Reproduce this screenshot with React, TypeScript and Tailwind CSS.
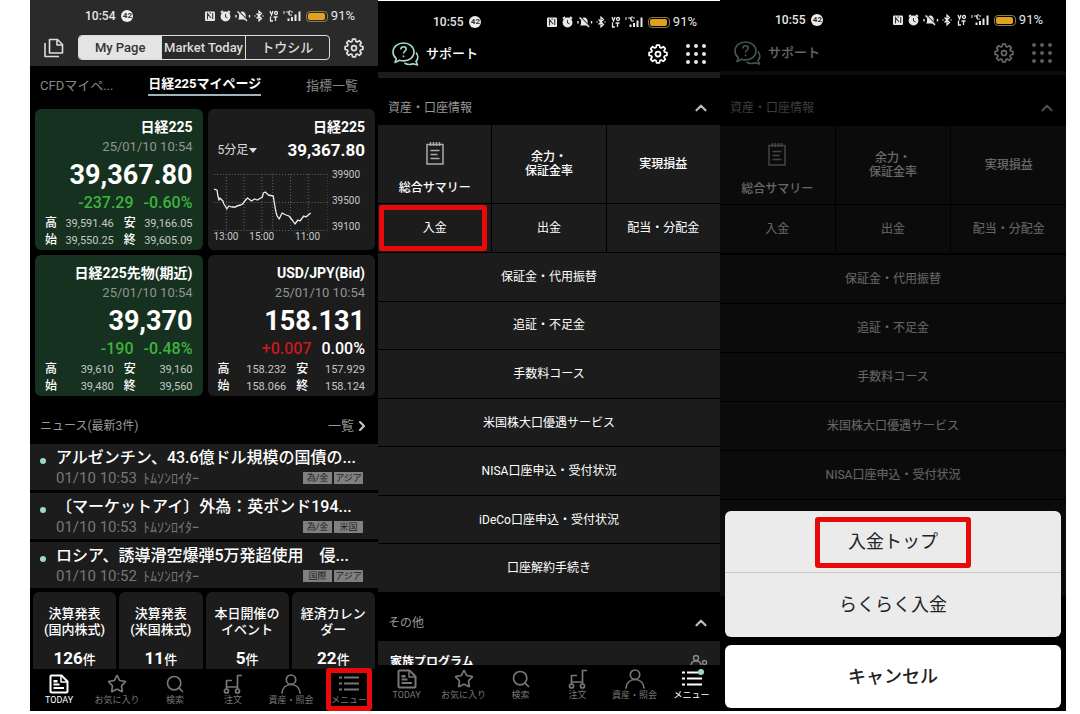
import type { ReactNode } from 'react'
import { ChevronRight, ChevronUp, Search, Star } from 'lucide-react'

const teeth = Array.from({ length: 8 }, (_, i) => i * 45)

const gearOutline = teeth
  .flatMap((a) => [
    [a - 9, 10.8],
    [a + 9, 10.8],
    [a + 17, 8.2],
    [a + 28, 8.2],
  ])
  .map(([deg, r]) => {
    const rad = (deg * Math.PI) / 180
    return `${12 + r * Math.cos(rad)},${12 + r * Math.sin(rad)}`
  })
  .join(' ')

function Gear() {
  return (
    <svg viewBox="0 0 24 24" className="size-5" fill="none" stroke="currentColor" strokeWidth="2.1" strokeLinejoin="round">
      <polygon points={gearOutline} />
      <circle cx="12" cy="12" r="3" />
    </svg>
  )
}

function StatusBar({ time, className }: { time: string; className: string }) {
  return (
    <div className={`flex items-center justify-between pl-[55px] pr-[23px] text-[#e8e8e8] ${className}`}>
      <div className="flex items-center gap-1.5 text-xs font-medium">
        <span>{time}</span>
        <span className="flex size-3 items-center justify-center rounded-full bg-[#eee] text-[8px] font-bold text-[#333]">42</span>
      </div>
      <div className="flex items-center gap-[3px]">
        <svg viewBox="0 0 98 12" className="h-3 w-[98px]" fill="none" stroke="currentColor">
          <rect x="0" y="1.5" width="10" height="9.5" rx="1" fill="currentColor" stroke="none" />
          <path d="M2.5 9.5V3.5L6 8M7.7 3v6M4.5 3h1.5" stroke="#333" strokeWidth="1.1" />
          <circle cx="20.5" cy="6.5" r="4.9" fill="currentColor" stroke="none" />
          <path d="M20.5 4v3l2 .8" stroke="#333" />
          <path d="M16 2.7l2-1.700M25 2.7L23 1" strokeWidth="1.8" />
          <path d="M33 9.500h9c-1-1-1.300-2-1.300-4C40.700 3.300 39.300 1.500 37.300 1.500S34 3.300 34 5.500c0 2 0 3-1 4z" fill="currentColor" stroke="none" />
          <path d="M33.500 1l9 9" stroke="#333" strokeWidth="1.200" />
          <path d="M32.500 1.500l9.500 9.500M31 5v2.500M44.500 5v2.500" strokeWidth="1.400" />
          <path d="M51.500 3.500l5 5-2.500 2.300V1.200l2.500 2.300-5 5M49.500 6h1M57.500 6h1" strokeWidth="1.300" />
          <path d="M65 1l1.500 4L68 1M65.500 6.500v4.500h2.500M68.500 7h4M70.500 7v4" strokeWidth="1.300" />
          <circle cx="71" cy="3" r="1.500" strokeWidth="1.300" />
          <path d="M79 1v3M81 2h3v2M86 1h-2v4h3M87 1v2" />
          <path d="M83.500 11V8.500M87 11V7M90.500 11V4.500M94.500 11V1.500" strokeWidth="2" />
        </svg>
        <span className="flex h-[11px] w-[22px] rounded-[4px] border border-[#8a7a50] p-px">
          <span className="w-[17px] rounded-[2px] bg-[#e0a020]" />
        </span>
        <span className="text-[13px] leading-4">91%</span>
      </div>
    </div>
  )
}

function TodayIcon() {
  return (
    <svg viewBox="0 0 20 20" className="size-5" fill="none" stroke="currentColor" strokeWidth="2" strokeLinejoin="round">
      <path d="M1.500 2.500a1 1 0 0 1 1-1h10l6 6v10a1 1 0 0 1-1 1h-15a1 1 0 0 1-1-1z" />
      <path d="M12 2v6h6" strokeWidth="1.500" />
      <path d="M4.500 10.500h6M4.500 14h10.500" strokeWidth="1.800" />
      <path d="M4.500 6h4v2.500h-4z" fill="currentColor" stroke="none" />
    </svg>
  )
}

function CartIcon() {
  return (
    <svg viewBox="0 0 20 20" className="size-5" fill="none" stroke="currentColor" strokeWidth="1.700" strokeLinejoin="round">
      <circle cx="3.500" cy="17" r="2" />
      <circle cx="14.500" cy="17" r="2" />
      <path d="M3.500 15V6.500H9M3.500 13h11M14.500 15V1.500H19" />
    </svg>
  )
}

function PersonIcon() {
  return (
    <svg viewBox="0 0 20 20" className="size-5" fill="none" stroke="currentColor" strokeWidth="1.700" strokeLinecap="round">
      <circle cx="10" cy="5.700" r="4.700" />
      <path d="M1 19c.5-5 4-8.500 9-8.500s8.500 3.500 9 8.500" />
    </svg>
  )
}

function MenuIcon() {
  return (
    <svg viewBox="0 0 20 20" className="size-5" fill="none" stroke="currentColor" strokeWidth="2">
      <path d="M0 3.500h3M0 9.500h3M0 15.500h3M5 3.500h15M5 9.500h15M5 15.500h15" />
    </svg>
  )
}

const navItems = [
  { label: 'TODAY', icon: <TodayIcon /> },
  { label: 'お気に入り', icon: <Star className="size-5" strokeWidth={2} /> },
  { label: '検索', icon: <Search className="size-5" strokeWidth={2} /> },
  { label: '注文', icon: <CartIcon /> },
  { label: '資産・照会', icon: <PersonIcon /> },
  { label: 'メニュー', icon: <MenuIcon /> },
]

function BottomNav({ active, marked, dot, className }: { active: string; marked?: string; dot?: string; className: string }) {
  return (
    <nav className={`grid grid-cols-6 bg-black ${className}`}>
      {navItems.map((item) => (
        <a
          key={item.label}
          href="#"
          className={`relative flex flex-col items-center gap-px whitespace-nowrap text-[9px] leading-[11px] ${item.label === active ? 'text-white' : 'text-[#777]'}`}
        >
          {item.icon}
          {item.label}
          {item.label === dot && <span className="absolute right-4 top-0 size-1.5 rounded-full bg-[#9fd6d2]" />}
          {item.label === marked && <span className="absolute -top-1.5 bottom-0 left-1.5 right-1.5 rounded-[3px] border-[5px] border-[#e60a0a]" />}
        </a>
      ))}
    </nav>
  )
}

type Quote = {
  name: string
  price: string
  diff: string
  rate: string
  diffColor: string
  rateColor: string
  bg: string
  stats: string[][]
}

const quotes: Quote[] = [
  {
    name: '日経225',
    price: '39,367.80',
    diff: '-237.29',
    rate: '-0.60%',
    diffColor: 'text-[#3cb43c]',
    rateColor: 'text-[#3cb43c]',
    bg: 'bg-[#16311f]',
    stats: [['高', '39,591.46'], ['安', '39,166.05'], ['始', '39,550.25'], ['終', '39,605.09']],
  },
  {
    name: '日経225先物(期近)',
    price: '39,370',
    diff: '-190',
    rate: '-0.48%',
    diffColor: 'text-[#3cb43c]',
    rateColor: 'text-[#3cb43c]',
    bg: 'bg-[#16311f]',
    stats: [['高', '39,610'], ['安', '39,160'], ['始', '39,480'], ['終', '39,560']],
  },
  {
    name: 'USD/JPY(Bid)',
    price: '158.131',
    diff: '+0.007',
    rate: '0.00%',
    diffColor: 'text-[#c8191e]',
    rateColor: 'text-white',
    bg: 'bg-[#1c1c1c]',
    stats: [['高', '158.232'], ['安', '157.929'], ['始', '158.066'], ['終', '158.124']],
  },
]

function QuoteCard({ quote }: { quote: Quote }) {
  return (
    <div className={`rounded-md px-2.5 pb-px pt-2 text-right text-white ${quote.bg}`}>
      <h2 className="text-sm font-bold leading-5">{quote.name}</h2>
      <p className="text-[13px] leading-5 text-[#8f9691]">25/01/10 10:54</p>
      <p className="text-[27px] font-bold leading-9">{quote.price}</p>
      <p className="flex justify-end gap-2.5 text-base font-medium leading-5">
        <span className={quote.diffColor}>{quote.diff}</span>
        <span className={quote.rateColor}>{quote.rate}</span>
      </p>
      <dl className="mt-0.5 grid grid-cols-2 gap-x-2.5 text-[11px] leading-[17px]">
        {quote.stats.map(([label, value]) => (
          <div key={label} className="flex justify-between">
            <dt className="text-xs font-medium leading-[17px]">{label}</dt>
            <dd className="text-[#c4c8c5]">{value}</dd>
          </div>
        ))}
      </dl>
    </div>
  )
}

function ChartCard() {
  return (
    <div className="rounded-md bg-[#1c1c1c] px-2.5 pt-2 text-white">
      <h2 className="text-right text-sm font-bold leading-5">日経225</h2>
      <div className="flex items-center justify-between">
        <label className="flex items-center text-[#ddd]">
          <select aria-label="足種" className="appearance-none bg-transparent text-xs leading-4">
            <option>5分足</option>
          </select>
          <svg viewBox="0 0 8 5" className="h-[5px] w-2" fill="currentColor">
            <path d="M0 0h8L4 5z" />
          </svg>
        </label>
        <span className="text-[17px] font-bold leading-[26px]">39,367.80</span>
      </div>
      <div className="-ml-1 mt-1 flex text-[10px] text-[#c8c8c8]">
        <div className="flex-1">
          <svg viewBox="0 0 116 64" className="h-16 w-full" fill="none" preserveAspectRatio="none">
            <path d="M0 7.500h116M0 35.500h116M0 63.500h116M12.500 7v57M30.500 7v57M48.500 7v57M59.500 7v57M77.500 7v57M95.500 7v57M115.500 7v57" stroke="#666" strokeDasharray="1 2" />
            <path
              d="M0 22l3 1 1 6 1 4 1-2 3 3 1 3 2 3 1 2 2-3 3 1h4l1-1 4-1 2-1 3-4 2-2 4 3 3-2 3 1 5-3 1-4 2-1 3 3 5 1 1 6 1 6 1 5 1 3 2 3 3-6 4 2 3 1 4 5 2 3 3-4 2 1 4-5 2 1 5-4"
              stroke="#eee"
              strokeWidth="1.300"
              strokeLinejoin="round"
            />
          </svg>
          <div className="flex justify-between pr-2 leading-3">
            <span>13:00</span>
            <span>15:00</span>
            <span className="ml-2.5">11:00</span>
          </div>
        </div>
        <div className="flex w-[37px] flex-col justify-between pb-2.5 pl-1 pt-0.5 leading-3">
          <span>39900</span>
          <span>39500</span>
          <span>39100</span>
        </div>
      </div>
    </div>
  )
}

const news = [
  { title: 'アルゼンチン、43.6億ドル規模の国債の...', time: '01/10 10:53', tags: ['為/金', 'アジア'] },
  { title: '〔マーケットアイ〕外為：英ポンド194...', time: '01/10 10:53', tags: ['為/金', '米国'] },
  { title: 'ロシア、誘導滑空爆弾5万発超使用　侵...', time: '01/10 10:52', tags: ['国際', 'アジア'] },
]

const events = [
  { lines: ['決算発表', '(国内株式)'], count: 126 },
  { lines: ['決算発表', '(米国株式)'], count: 11 },
  { lines: ['本日開催の', 'イベント'], count: 5 },
  { lines: ['経済カレン', 'ダー'], count: 22 },
]

function MyPageScreen() {
  return (
    <section className="flex min-w-0 flex-col bg-black">
      <header className="bg-[#2a2a2a] pb-1.5">
        <StatusBar time="10:54" className="h-8" />
        <div className="flex items-center gap-3.5 px-3.5 pt-[3px] text-[#ddd]">
          <svg viewBox="0 0 20 20" className="size-5" fill="none" stroke="currentColor" strokeWidth="1.600" strokeLinejoin="round">
            <path d="M5.500 1.500h8l5 5v8.500h-13z" />
            <path d="M13 2v5h5" />
            <path d="M1 5v13.500h14" />
          </svg>
          <div className="grid h-[25px] flex-1 grid-cols-3 divide-x divide-[#ddd] overflow-hidden whitespace-nowrap rounded border border-[#ddd] text-[13px] font-medium">
            <button className="bg-[#e4e4e4] text-[#333]">My Page</button>
            <button>Market Today</button>
            <button>トウシル</button>
          </div>
          <button aria-label="設定"><Gear /></button>
        </div>
      </header>
      <nav className="flex h-[43px] items-start justify-between pl-2.5 pr-5 pt-2 text-[13px] text-[#888]">
        <a href="#" className="pt-0.5 leading-5">CFDマイペ...</a>
        <a href="#" className="border-b-2 border-[#9fb4bc] font-bold leading-5 text-white">日経225マイページ</a>
        <a href="#" className="ml-2.5 pt-0.5 leading-5">指標一覧</a>
      </nav>
      <div className="grid grid-cols-2 gap-[5px] pl-[5px] pr-[3px]">
        <QuoteCard quote={quotes[0]} />
        <ChartCard />
        <QuoteCard quote={quotes[1]} />
        <QuoteCard quote={quotes[2]} />
      </div>
      <div className="flex h-12 items-center justify-between pl-2.5 pr-2 pt-3 text-xs text-[#999]">
        <h2>ニュース(最新3件)</h2>
        <a href="#" className="flex items-center text-[13px]">
          一覧
          <ChevronRight className="size-4 text-[#ccc]" strokeWidth={3} />
        </a>
      </div>
      <ul className="flex flex-col gap-[3px]">
        {news.map((n) => (
          <li key={n.title}>
            <a href="#" className="flex h-[46px] items-center gap-2.5 bg-[#1c1c1c] pl-2.5 pr-[15px]">
              <span className="mt-3.5 size-1.5 shrink-0 self-start rounded-full bg-[#9fd6d2]" />
              <span className="min-w-0 flex-1">
                <span className="block whitespace-nowrap text-base font-medium leading-[22px] text-white">{n.title}</span>
                <span className="flex items-center gap-1.5 text-[15px] leading-[18px] text-[#777]">
                  {n.time}
                  <span className="flex-1 text-sm leading-[18px]">ﾄﾑｿﾝﾛｲﾀｰ</span>
                  <span className="flex gap-0.5">
                    {n.tags.map((tag) => (
                      <span key={tag} className="w-[29px] bg-[#808080] text-center text-[9px] leading-3 text-[#222]">{tag}</span>
                    ))}
                  </span>
                </span>
              </span>
            </a>
          </li>
        ))}
      </ul>
      <div className="mt-1 grid grid-cols-4 gap-[3px] px-[3px] text-center text-[13px] font-medium text-white">
        {events.map((e, i) => (
          <a key={i} href="#" className="flex h-[77px] flex-col rounded-t-md bg-[#1c1c1c] pt-3.5 leading-4">
            <span className="whitespace-nowrap">{e.lines[0]}</span>
            <span className="whitespace-nowrap">{e.lines[1]}</span>
            <span className="mt-2 leading-6">
              <b className="text-[17px]">{e.count}</b>件
            </span>
          </a>
        ))}
      </div>
      <BottomNav active="TODAY" marked="メニュー" className="h-[42px] pt-[5px]" />
    </section>
  )
}

function SupportHeader({ className }: { className: string }) {
  return (
    <div className={`flex items-center pl-3.5 pr-3.5 text-white ${className}`}>
      <svg viewBox="0 0 28 24" className="h-6 w-7" fill="none" stroke="#a9d8cc" strokeWidth="1.600" strokeLinejoin="round">
        <path d="M11.500 1C5.500 1 1 5 1 10c0 2.800 1.300 5 3.300 6.700L3 20.500l4.500-2.200c1.300.4 2.600.6 4 .6 6 0 10.500-4 10.500-9S17.500 1 11.500 1z" />
        <path d="M24 10.500c2.500 3 2 6.500 0 9l1.500 3.500-4.500-1.300c-3 1.200-6 1-8.500-.7" />
        <path d="M8.800 7.500c0-1.800 1.200-2.800 2.700-2.800s2.700 1 2.700 2.500c0 2-2.700 2-2.700 4.300M11.500 13.500v1.800" />
      </svg>
      <h1 className="ml-1.5 flex-1 text-[13px] font-medium leading-4">サポート</h1>
      <button aria-label="設定" className="mr-[18px]"><Gear /></button>
      <button aria-label="アプリ一覧" className="grid grid-cols-3 gap-1">
        {Array.from({ length: 9 }, (_, i) => (
          <span key={i} className="size-1 rounded-full bg-[#e8e8e8]" />
        ))}
      </button>
    </div>
  )
}

function SectionTitle({ children, className }: { children: ReactNode; className: string }) {
  return (
    <div className={`flex items-center justify-between pl-2.5 pr-2.5 text-xs text-[#999] ${className}`}>
      <h2>{children}</h2>
      <ChevronUp className="size-[18px] text-[#bbb]" strokeWidth={3} />
    </div>
  )
}

function AssetTiles({ marked }: { marked?: boolean }) {
  return (
    <div className="grid grid-cols-3 gap-px text-xs leading-[14px] text-white">
      <button className="flex h-[78px] flex-col items-center bg-[#1c1c1c] pt-4 font-medium">
        <svg viewBox="0 0 18 24" className="mb-4 h-6 w-[18px] text-[#aaa]" fill="none" stroke="currentColor" strokeWidth="1.500">
          <path d="M1 3.500h16v19.500H1zM4.500 1v4M7.500 1v4M10.500 1v4M13.500 1v4M4.500 9.500h9M4.500 13.500h7M4.500 17.500h9" />
        </svg>
        総合サマリー
      </button>
      <button className="bg-[#1c1c1c] font-medium">
        余力・
        <br />
        保証金率
      </button>
      <button className="bg-[#1c1c1c] font-medium">実現損益</button>
      <button className="relative h-12 bg-[#1c1c1c]">
        入金
        {marked && <span className="absolute inset-y-px left-px right-1 rounded-[3px] border-[5px] border-[#e60a0a]" />}
      </button>
      <button className="bg-[#1c1c1c]">出金</button>
      <button className="bg-[#1c1c1c]">配当・分配金</button>
    </div>
  )
}

const menuRows = [
  '保証金・代用振替',
  '追証・不足金',
  '手数料コース',
  '米国株大口優遇サービス',
  'NISA口座申込・受付状況',
  'iDeCo口座申込・受付状況',
  '口座解約手続き',
]

function MenuScreen() {
  return (
    <section className="mt-px flex min-w-0 flex-col bg-black">
      <StatusBar time="10:55" className="h-[42px]" />
      <SupportHeader className="h-[29px] pb-[7px]" />
      <div className="h-1.5 bg-[#1c1c1c]" />
      <SectionTitle className="h-[47px] pt-3">資産・口座情報</SectionTitle>
      <AssetTiles marked />
      <div className="mt-px flex min-h-[339px] flex-col gap-px text-xs text-white">
        {menuRows.map((row) => (
          <button key={row} className="flex-1 bg-[#1c1c1c]">{row}</button>
        ))}
      </div>
      <SectionTitle className="h-[49px] pt-3">その他</SectionTitle>
      <div className="flex h-6 items-start justify-between overflow-hidden bg-[#1c1c1c] px-3 pt-3 text-xs font-bold leading-[18px] text-white">
        家族プログラム
        <svg viewBox="0 0 18 16" className="h-4 w-[18px] text-[#888]" fill="none" stroke="currentColor" strokeWidth="1.500">
          <circle cx="6" cy="5" r="2.500" />
          <path d="M1 13c0-3 2-5 5-5s5 2 5 5" />
          <circle cx="14.500" cy="9.500" r="2" />
        </svg>
      </div>
      <BottomNav active="メニュー" dot="メニュー" className="h-[46px] pt-1" />
    </section>
  )
}

function DepositSheetScreen() {
  return (
    <section className="relative flex min-w-0 flex-col bg-black">
      <StatusBar time="10:55" className="h-10" />
      <div className="opacity-40">
        <SupportHeader className="h-[31px] pb-[5px]" />
        <div className="h-1 bg-[#1c1c1c]" />
        <SectionTitle className="h-[51px] pt-3.5">資産・口座情報</SectionTitle>
        <AssetTiles />
        <div className="mt-0.5 flex flex-col gap-px text-xs text-white">
          {menuRows.slice(0, 5).map((row) => (
            <button key={row} className="h-12 bg-[#1c1c1c]">{row}</button>
          ))}
          <div className="h-24 bg-[#1c1c1c]" />
        </div>
      </div>
      <div role="dialog" aria-label="入金" className="absolute inset-x-[5px] bottom-[3px] text-lg text-[#222]">
        <div className="mb-2 divide-y divide-[#c8c8c8] overflow-hidden rounded-md bg-[#ebebeb]">
          <button className="relative block h-[62px] w-full">
            入金トップ
            <span className="absolute inset-x-[90px] bottom-1 top-1.5 rounded-[3px] border-[5px] border-[#e60a0a]" />
          </button>
          <button className="block h-16 w-full">らくらく入金</button>
        </div>
        <button className="block h-[63px] w-full rounded-md bg-white font-medium">キャンセル</button>
      </div>
    </section>
  )
}

export default function App() {
  return (
    <main lang="ja" className="grid min-w-[1040px] grid-cols-[348fr_342fr_346fr] bg-white pb-[3px] pl-[30px] pr-3.5 font-['Roboto','Noto_Sans_CJK_JP',sans-serif]">
      <MyPageScreen />
      <MenuScreen />
      <DepositSheetScreen />
    </main>
  )
}
